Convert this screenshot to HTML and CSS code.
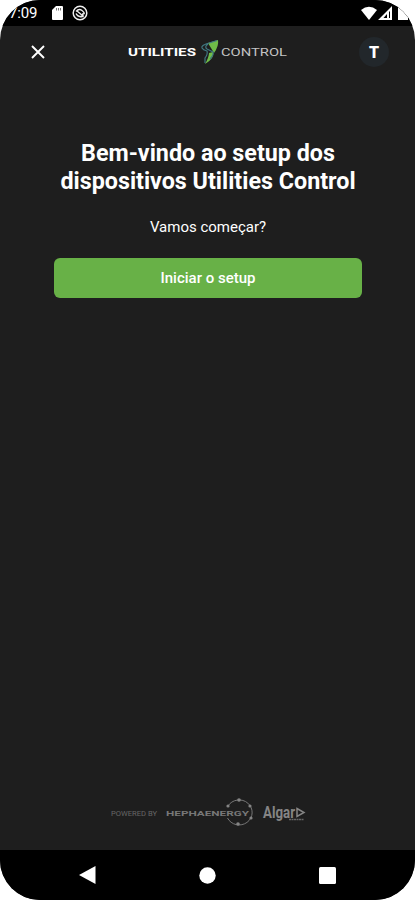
FILE: index.html
```html
<!DOCTYPE html>
<html lang="pt-BR">
<head>
  <meta charset="UTF-8">
  <title>Utilities Control - Setup</title>
  <meta name="viewport" content="width=device-width, initial-scale=1.0">
  <link rel="stylesheet" href="styles.css">
</head>
<body>
  <div class="phone">

    <div class="status-bar">
      <span class="clock">7:09</span>
      <svg class="icon-sd" width="11" height="14" viewBox="0 0 11 14">
        <path fill="#fff" d="M4 0h6q1 0 1 1v12q0 1-1 1H1q-1 0-1-1V4z"/>
        <path stroke="#777" stroke-width="1" d="M4.500 2v2.500M6.500 2v2.500M8.500 2v2.500"/>
      </svg>
      <svg class="icon-sync" width="16" height="16" viewBox="0 0 16 16" fill="none" stroke="#eee">
        <circle cx="8" cy="8" r="6.800" stroke-width="1.500"/>
        <path stroke-width="1.400" d="M4 6.500Q7 3 10 5.500T12 9M4 8.500q2 4 6 3M5 6l6 5M11 8v3.500H7.500"/>
      </svg>
      <svg class="icon-signal" width="47" height="16" viewBox="0 0 47 16">
        <path fill="#fff" d="M0 5Q8-1.500 16 5L8 15z"/>
        <path fill="#fff" fill-rule="evenodd" d="M17 15L31 1v14zM22.500 13H26V9zM28 13h1V6l-1 1z"/>
        <path fill="#fff" d="M37 0h10v15H37z"/>
      </svg>
    </div>

    <header>
      <button class="close" aria-label="Fechar">
        <svg width="14" height="14" viewBox="0 0 14 14">
          <path stroke="#fff" stroke-width="1.900" d="M1 1l12 12M13 1L1 13"/>
        </svg>
      </button>
      <svg class="logo" width="160" height="26" viewBox="0 0 160 26">
        <text class="logo-bold" x="0" y="17" textLength="68" lengthAdjust="spacingAndGlyphs">UTILITIES</text>
        <path fill="#6fbd48" d="M90 1L80 4L86 14Q91 7 90 1z"/>
        <path fill="#6fbd48" d="M85 13Q87 19 77 25Q81 18 81 14z"/>
        <path fill="none" stroke="#3f7780" stroke-width="1.200" d="M89 1.500L78 5Q73 7 74 9Q75 11 79 12Q80 15 77 19V24M80 5Q76 8 79 10L85 13Q86 16 82 20"/>
        <text class="logo-light" x="93" y="17" textLength="66" lengthAdjust="spacingAndGlyphs">CONTROL</text>
      </svg>
      <div class="avatar">T</div>
    </header>

    <main>
      <h1>Bem-vindo ao setup dos<br>dispositivos Utilities Control</h1>
      <p>Vamos começar?</p>
      <button class="start">Iniciar o setup</button>
    </main>

    <footer>
      <svg width="196" height="30" viewBox="0 0 196 30">
        <text class="powered" x="1" y="18" textLength="46" lengthAdjust="spacingAndGlyphs">POWERED BY</text>
        <text class="hepha" x="56" y="18" textLength="83" lengthAdjust="spacingAndGlyphs">HEPHAENERGY</text>
        <path fill="none" stroke="#777" stroke-width="1" d="M118 8A13 12.500 0 1 1 117.500 20"/>
        <g fill="#858585">
          <circle cx="118" cy="8" r="1.600"/>
          <circle cx="129" cy="2" r="1.800"/>
          <circle cx="140" cy="8" r="1.600"/>
          <circle cx="141" cy="20" r="1.600"/>
          <circle cx="128" cy="26" r="1.800"/>
        </g>
        <text class="algar" x="153" y="20" textLength="32" lengthAdjust="spacingAndGlyphs">Algar</text>
        <path fill="none" stroke="#858585" stroke-width="1.500" d="M187 10.500l7 4-7 4z"/>
        <path stroke="#666" stroke-width="1.500" stroke-dasharray="2 .5" d="M179 21.500h15"/>
      </svg>
    </footer>

    <nav>
      <svg width="17" height="18" viewBox="0 0 17 18"><path fill="#fff" d="M16.500 0v18L0 9z"/></svg>
      <svg width="17" height="17" viewBox="0 0 17 17"><circle cx="8.500" cy="8.500" r="8.200" fill="#fff"/></svg>
      <svg width="17" height="17" viewBox="0 0 17 17"><rect width="17" height="17" rx="1.500" fill="#fff"/></svg>
    </nav>

  </div>
</body>
</html>
```
FILE: styles.css
```css
* { box-sizing: border-box; margin: 0; padding: 0; font-family: Roboto, Arial, sans-serif; }
body { background: #fff; }

.phone {
  display: flex;
  flex-direction: column;
  width: 415px;
  height: 900px;
  background: #1e1e1e;
  color: #fff;
  border-radius: 40px;
  overflow: hidden;
}

.status-bar {
  display: flex;
  align-items: center;
  height: 26px;
  padding: 0 7px 0 9px;
  background: #000;
}

.clock { width: 43px; font-size: 15px; letter-spacing: -0.2px; }
.icon-sync { margin-left: 9px; }
.icon-signal { margin-left: auto; }

header {
  display: flex;
  align-items: center;
  height: 52px;
  padding: 0 26px 0 31px;
}

button { border: none; color: #fff; cursor: pointer; }

.close { display: flex; background: none; }

.logo { margin: 0 auto 0 83px; }
.logo-bold { fill: #fff; font-size: 10px; font-weight: bold; }
.logo-light { fill: #c4c4c4; font-size: 10.5px; }

.avatar {
  width: 30px;
  height: 30px;
  border-radius: 50%;
  background: #22272b;
  font-size: 16px;
  font-weight: 900;
  line-height: 31px;
  text-align: center;
}

main {
  flex: 1;
  padding: 61px 53px 0 54px;
  text-align: center;
}

h1 { font-size: 23.3px; line-height: 28px; white-space: nowrap; }

p { margin-top: 22px; font-size: 15px; line-height: 20px; }

.start {
  width: 308px;
  height: 40px;
  margin-top: 21px;
  border-radius: 6px;
  background: #68b147;
  font-size: 15px;
  font-weight: 500;
}

footer {
  display: flex;
  justify-content: center;
  height: 52px;
}

.powered { fill: #666; font-size: 8px; }
.hepha { fill: #777; font-size: 8px; font-weight: bold; }
.algar { fill: #858585; font-size: 17px; font-weight: bold; }

nav {
  display: flex;
  align-items: center;
  justify-content: space-between;
  height: 50px;
  padding: 0 79px;
  background: #000;
}
```
